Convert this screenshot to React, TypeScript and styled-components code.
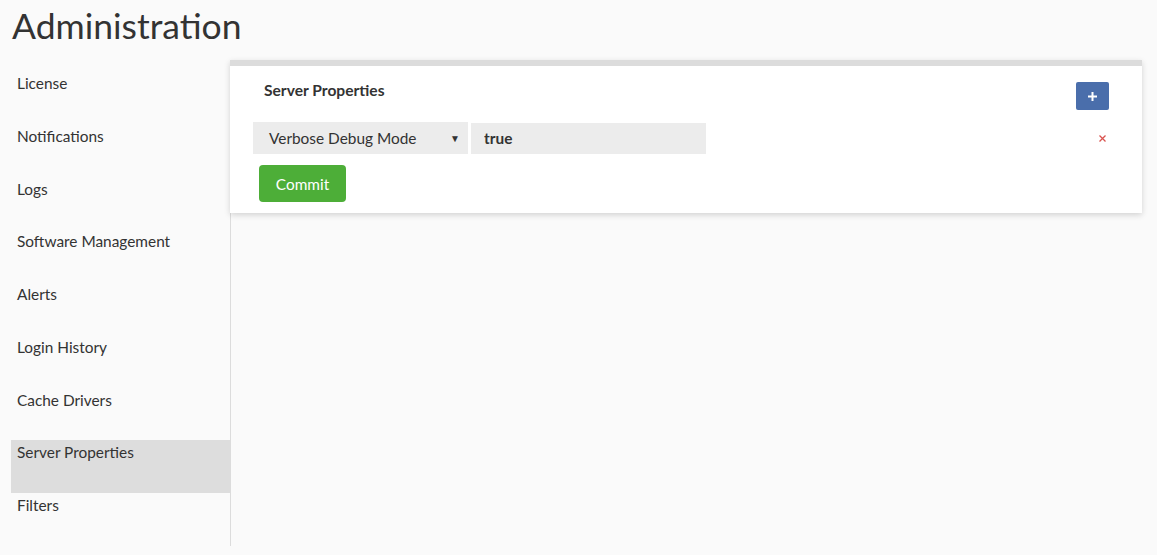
import React from "react";
import styled, { createGlobalStyle } from "styled-components";

const GlobalStyle = createGlobalStyle`
	html, body {
		margin: 0;
		padding: 0;
		background: #fafafa;
		font-family: Lato, "Open Sans", sans-serif;
		color: #333;
	}
`;

const Page = styled.div`
	width: 1157px;
	height: 555px;
	overflow: hidden;
`;
const Title = styled.h1`
	margin: 0;
	padding: 0 0 0 12px;
	font-size: 35.5px;
	font-weight: 400;
	line-height: 52px;
	height: 60px;
	color: #333;
`;
const Layout = styled.div`
	display: flex;
	align-items: flex-start;
	padding: 0 15px 0 11px;
`;
const Sidebar = styled.nav`
	width: 219px;
	margin-top: 11px;
	border-right: 1px solid #dcdcdc;
	display: flex;
	flex-direction: column;
`;
const NavItem = styled.div<{ $active?: boolean }>`
	height: 52.75px;
	box-sizing: border-box;
	padding: 2px 6px 0;
	font-size: 15.4px;
	line-height: 20px;
	color: #333;
	background: ${({ $active }) => ($active ? "#dddddd" : "transparent")};
`;
const Main = styled.main`
	flex: 1;
	margin-left: -1px;
`;
const Card = styled.section`
	background: #fff;
	border-top: 6px solid #dcdcdc;
	box-shadow: 0 2px 6px rgba(0, 0, 0, 0.16);
	padding: 16px 33px 11px 23px;
`;
const CardHeader = styled.div`
	display: flex;
	justify-content: space-between;
	align-items: flex-start;
	padding-left: 11px;
`;
const CardTitle = styled.h2`
	margin: 0;
	font-size: 15.6px;
	font-weight: 700;
	line-height: 16px;
	color: #333;
`;
const AddButton = styled.button`
	width: 33px;
	height: 28px;
	border: none;
	border-radius: 2px;
	background: #4a6eab;
	color: #fff;
	display: grid;
	place-items: center;
	padding: 0;
`;
const PropRow = styled.div`
	display: flex;
	align-items: center;
	margin-top: 12px;
`;
const SelectBox = styled.div`
	width: 215px;
	height: 32px;
	box-sizing: border-box;
	background: #ececec;
	display: flex;
	align-items: center;
	justify-content: space-between;
	padding: 0 8px 0 16px;
	font-size: 15.4px;
	color: #333;
`;
const Caret = styled.span`
	font-size: 10px;
	color: #333;
`;
const ValueInput = styled.input`
	width: 235px;
	height: 31px;
	box-sizing: border-box;
	margin-left: 3px;
	border: none;
	background: #ececec;
	padding: 0 13px;
	font-family: Lato, "Open Sans", sans-serif;
	font-size: 15.4px;
	font-weight: 700;
	color: #333;
	outline: none;
`;
const RemoveButton = styled.button`
	margin-left: auto;
	margin-right: 3px;
	border: none;
	background: none;
	padding: 0;
	display: grid;
	place-items: center;
`;
const CommitButton = styled.button`
	margin: 11px 0 0 6px;
	width: 87px;
	height: 37px;
	border: none;
	border-radius: 4px;
	background: #4dae38;
	color: #fff;
	font-family: Lato, "Open Sans", sans-serif;
	font-size: 15.4px;
	padding: 0;
`;

const navItems = [
	"License",
	"Notifications",
	"Logs",
	"Software Management",
	"Alerts",
	"Login History",
	"Cache Drivers",
	"Server Properties",
	"Filters",
];

export default function App() {
	return (
		<Page>
			<GlobalStyle />
			<Title>Administration</Title>
			<Layout>
				<Sidebar>
					{navItems.map((item) => (
						<NavItem key={item} $active={item === "Server Properties"}>
							{item}
						</NavItem>
					))}
				</Sidebar>
				<Main>
					<Card>
						<CardHeader>
							<CardTitle>Server Properties</CardTitle>
							<AddButton aria-label="Add property">
								<svg width="9" height="9" viewBox="0 0 9 9">
									<path d="M4.5 0v9M0 4.5h9" stroke="#fff" strokeWidth="2" />
								</svg>
							</AddButton>
						</CardHeader>
						<PropRow>
							<SelectBox>
								<span>Verbose Debug Mode</span>
								<Caret>▼</Caret>
							</SelectBox>
							<ValueInput defaultValue="true" />
							<RemoveButton aria-label="Remove property">
								<svg width="7" height="7" viewBox="0 0 7 7">
									<path d="M0.5 0.5l6 6M6.5 0.5l-6 6" stroke="#d9534f" strokeWidth="1.3" />
								</svg>
							</RemoveButton>
						</PropRow>
						<CommitButton>Commit</CommitButton>
					</Card>
				</Main>
			</Layout>
		</Page>
	);
}
